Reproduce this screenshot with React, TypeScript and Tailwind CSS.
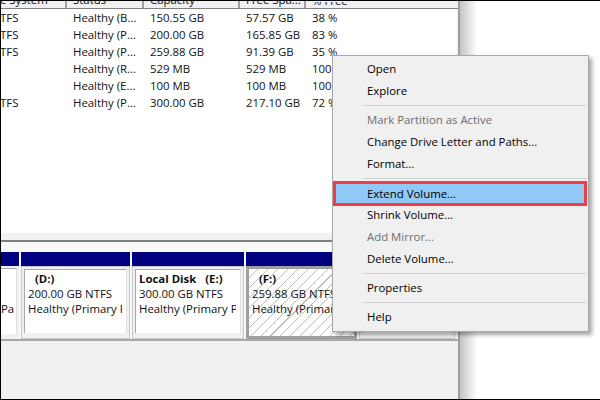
import type { ReactNode } from "react";

const rows = [
  ["TFS", "Healthy (B...", "150.55 GB", "57.57 GB", "38 %"],
  ["TFS", "Healthy (P...", "200.00 GB", "165.85 GB", "83 %"],
  ["TFS", "Healthy (P...", "259.88 GB", "91.39 GB", "35 %"],
  ["", "Healthy (R...", "529 MB", "529 MB", "100 %"],
  ["", "Healthy (E...", "100 MB", "100 MB", "100 %"],
  ["TFS", "Healthy (P...", "300.00 GB", "217.10 GB", "72 %"],
];

function Sep() {
  return (
    <div className="h-[7px] pt-[3px] pl-[30px] pr-px">
      <div className="h-px bg-[#d0d0d0]" />
    </div>
  );
}

function Item({ label, disabled }: { label: string; disabled?: boolean }) {
  return (
    <div className={"h-[22px] pl-[34px] leading-[22px] " + (disabled ? "text-[#6d6d6d]" : "text-black")}>{label}</div>
  );
}

function Partition({ w, title, size, status, selected }: { w: string; title?: ReactNode; size?: string; status?: string; selected?: boolean }) {
  return (
    <div className={"flex flex-col shrink-0 overflow-hidden " + w}>
      <div className="h-[14px] bg-[#000080] shrink-0" />
      <div className={"h-[73px] bg-[#f0f0f0] " + (selected ? "border-[3px] border-[#a0a0a0]" : "border border-[#c8c8c8] p-[2px] pb-[5px]")}>
        <div
          className={"h-full overflow-hidden whitespace-nowrap pl-[3px] leading-[15px] " + (selected ? "pt-[2px]" : "pt-[1px] bg-white border-t border-l border-r border-[#a8a8a8] border-r-[#e0e0e0]")}
          style={selected ? { background: "repeating-linear-gradient(135deg, #fff 0 6.2px, #bcbcbc 6.2px 7px)" } : undefined}
        >
          <div className="h-[15px] font-bold overflow-hidden mr-[4px]">{title}</div>
          <div className="h-[15px] overflow-hidden mr-[4px]">{size}</div>
          <div className="h-[15px] overflow-hidden mr-[4px]">{status}</div>
        </div>
      </div>
    </div>
  );
}

export default function App() {
  return (
    <div className="relative flex w-[600px] h-[400px] overflow-hidden bg-white border-y border-black text-[11.4px] text-[#111] font-['Open_Sans','Noto_Sans',sans-serif]">
      <div className="flex flex-col w-[460px] h-full shrink-0 border-l border-r-2 border-l-black border-r-[#a0a0a0] bg-[#f0f0f0]">
        <div className="flex h-[8px] shrink-0 items-end overflow-hidden bg-[#f0f0f0] border-b border-[#808080] leading-[14px] whitespace-nowrap">
          <div className="w-[66px] border-r-2 border-[#a0a0a0] h-full overflow-hidden"><div className="-mt-[8px] -ml-[1px]">e System</div></div>
          <div className="w-[77px] border-r-2 border-[#a0a0a0] h-full pl-[6px] overflow-hidden"><div className="-mt-[8px]">Status</div></div>
          <div className="w-[96px] border-r-2 border-[#a0a0a0] h-full pl-[6px] overflow-hidden"><div className="-mt-[8px]">Capacity</div></div>
          <div className="w-[66px] border-r-2 border-[#a0a0a0] h-full pl-[6px] overflow-hidden"><div className="-mt-[8px]">Free Spa...</div></div>
          <div className="flex-1 pl-[6px] overflow-hidden"><div className="-mt-[8px]">% Free</div></div>
        </div>
        <div className="h-[224px] mr-px shrink-0 bg-white">
          {rows.map((r, i) => (
            <div key={i} className="flex h-[17px] leading-[17px] whitespace-nowrap overflow-hidden">
              <div className="w-[72px] -ml-[1px] mr-[1px]">{r[0]}</div>
              <div className="w-[77px]">{r[1]}</div>
              <div className="w-[96px]">{r[2]}</div>
              <div className="w-[66px]">{r[3]}</div>
              <div>{r[4]}</div>
            </div>
          ))}
        </div>
        <div className="h-[9px] shrink-0 bg-[#f0f0f0] border-b-2 border-[#808080]" />
        <div className="h-[99px] shrink-0 bg-[#f8f8f8] border-b-2 border-[#a8a8a8] pt-[10px] overflow-hidden">
          <div className="flex gap-[2px]">
            <div className="flex flex-col w-[18px] shrink-0">
              <div className="h-[14px] bg-[#000080] shrink-0" />
              <div className="h-[73px] bg-[#f0f0f0] pb-[5px] pt-[2px] pr-[2px]">
                <div className="h-full bg-white border-t border-r border-[#a8a8a8] border-r-[#e0e0e0] overflow-hidden leading-[15px] whitespace-nowrap pt-[32px]">Pa</div>
              </div>
            </div>
            <Partition w="w-[109px]" title={<span className="pl-[7px]">(D:)</span>} size="200.00 GB NTFS" status="Healthy (Primary Partition)" />
            <Partition w="w-[112px]" title={<span className="whitespace-pre">Local Disk   (E:)</span>} size="300.00 GB NTFS" status="Healthy (Primary Partition)" />
            <Partition w="w-[111px]" selected title={<span className="pl-[7px]">(F:)</span>} size="259.88 GB NTFS" status="Healthy (Primary Partition)" />
            <Partition w="w-[96px]" />
          </div>
        </div>
        <div className="flex-1" />
      </div>
      <div className="w-[17px] h-full bg-gradient-to-r from-[#c4c4c4] to-white" />
      <div className="absolute left-[332px] top-[54px] w-[257px] h-[277px] bg-[#f0f0f0] border border-[#a8a8a8] shadow-[3px_3px_4px_rgba(0,0,0,0.35)] py-[2px] text-black">
        <Item label="Open" />
        <Item label="Explore" />
        <Sep />
        <Item label="Mark Partition as Active" disabled />
        <Item label="Change Drive Letter and Paths..." />
        <Item label="Format..." />
        <Sep />
        <div className="relative z-10 h-[25px] mt-[-1px] mb-[-2px] mr-px border-[3px] border-[#f33c45] bg-[#90c8f6] pl-[31px] leading-[20px]">Extend Volume...</div>
        <Item label="Shrink Volume..." />
        <Item label="Add Mirror..." disabled />
        <Item label="Delete Volume..." />
        <Sep />
        <Item label="Properties" />
        <Sep />
        <Item label="Help" />
      </div>
    </div>
  );
}
